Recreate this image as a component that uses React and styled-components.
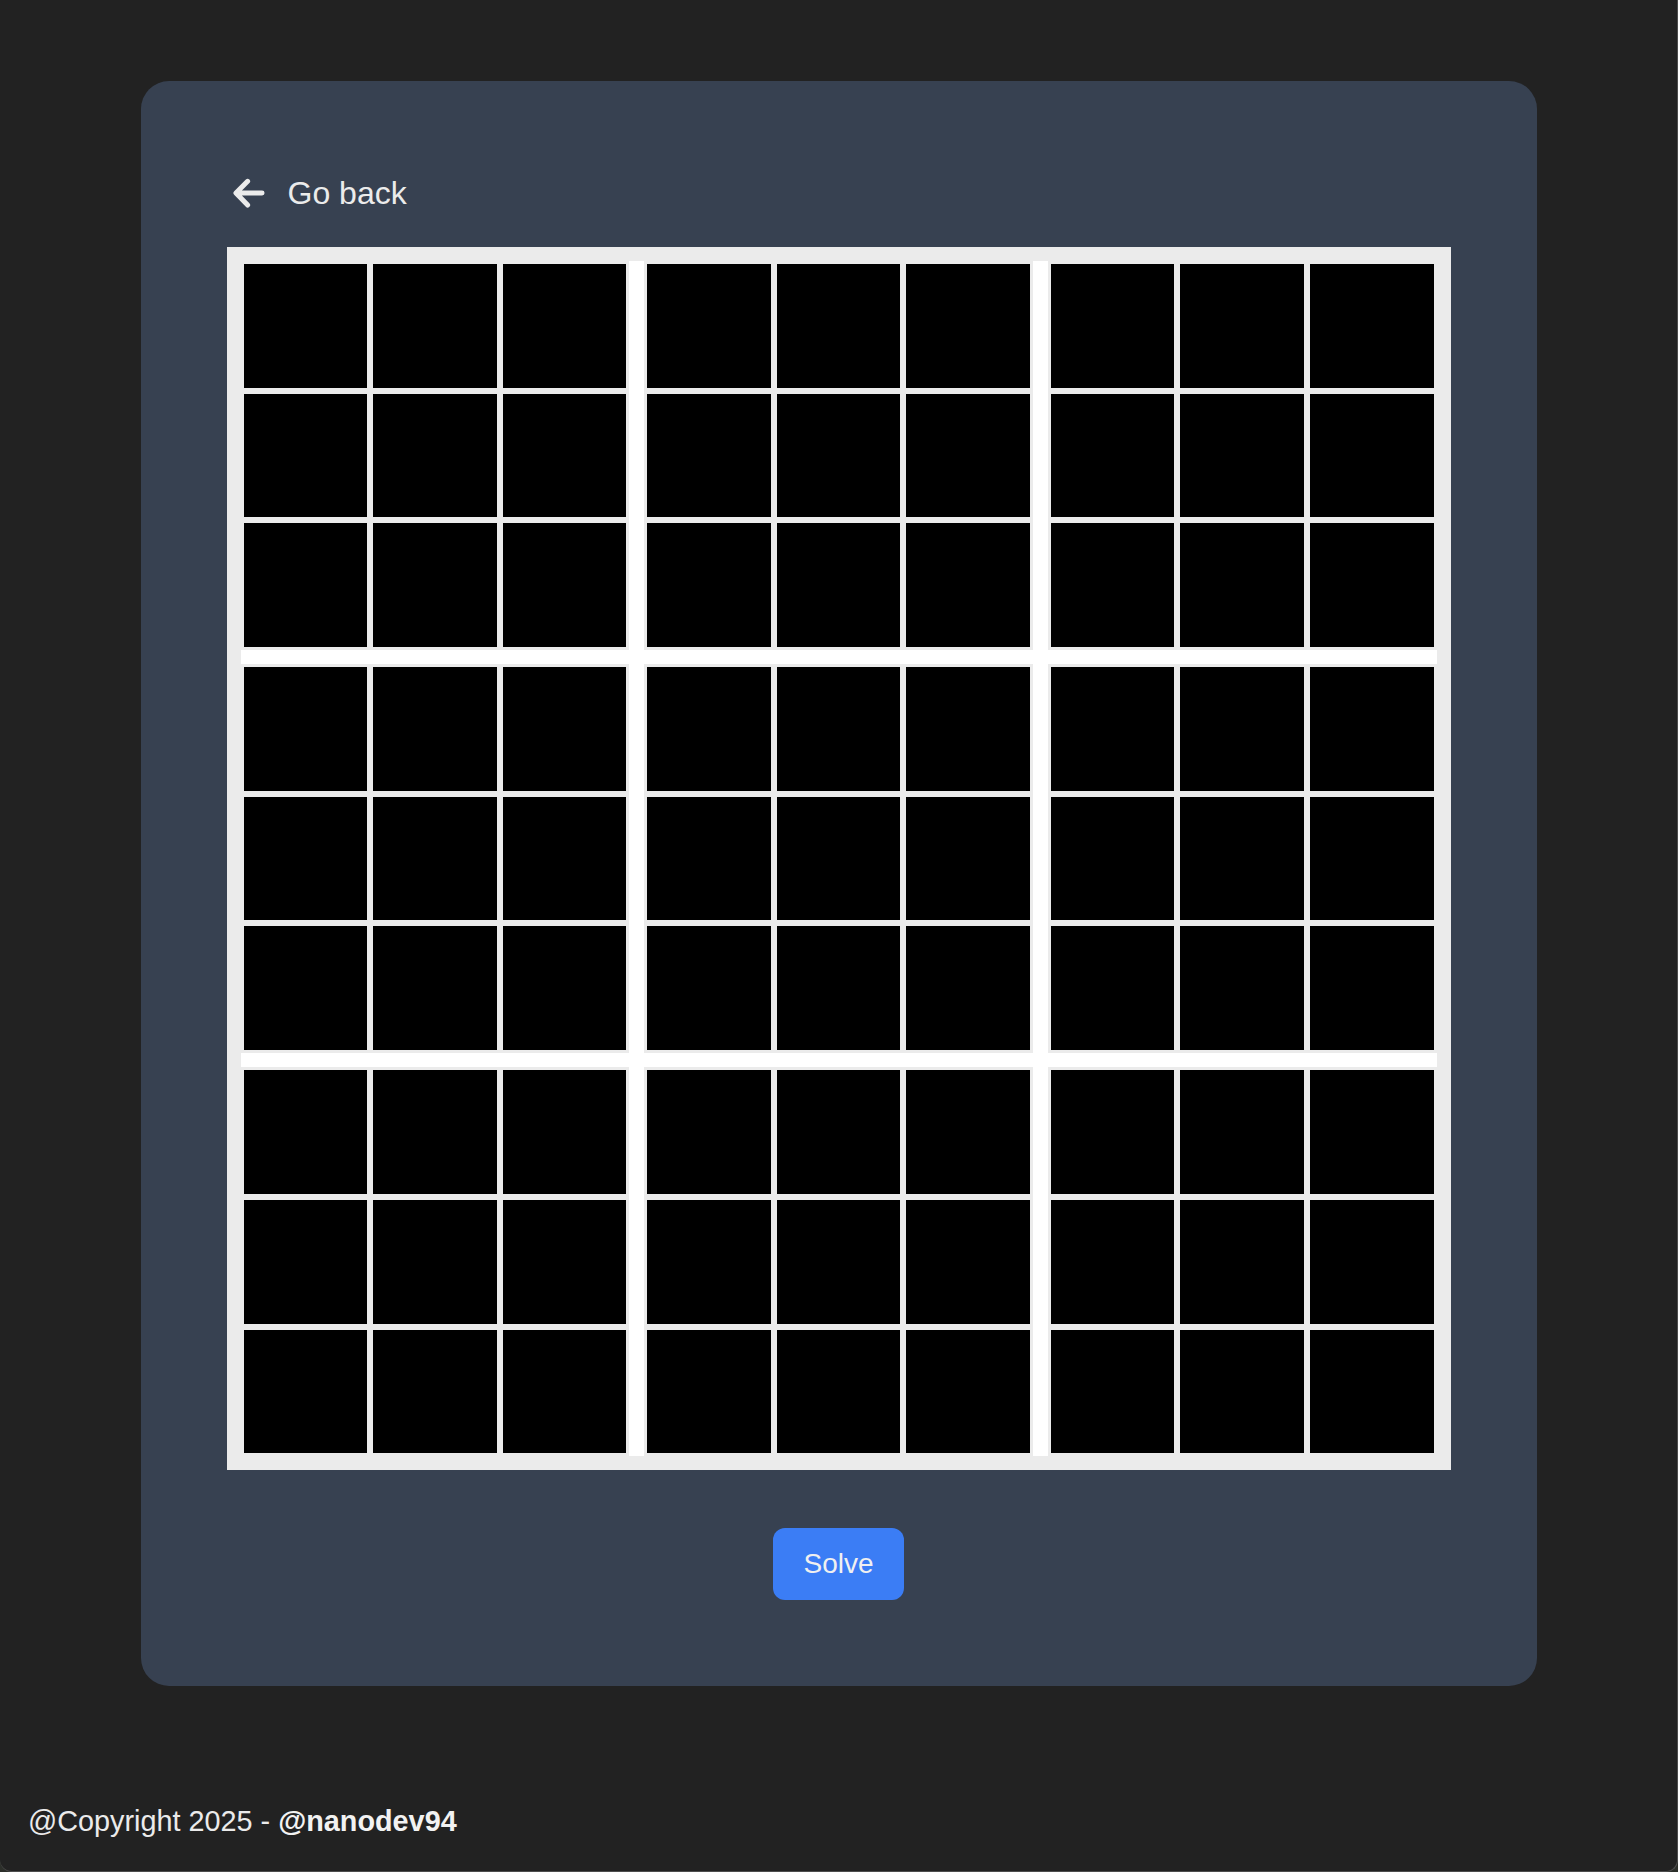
import React from "react";
import styled, { createGlobalStyle } from "styled-components";

const GlobalStyle = createGlobalStyle`
  html, body {
    margin: 0;
    padding: 0;
    background: #2c2f2a;
  }
  * { box-sizing: border-box; }
  body {
    font-family: "Liberation Sans", Arial, Helvetica, sans-serif;
  }
`;

const Page = styled.div`
  width: 1678px;
  min-height: 1872px;
  background: #222222;
  display: flex;
  flex-direction: column;
  border-right: 1px solid #4d4d4d;
  border-bottom: 1px solid #4d4d4d;
  border-bottom-left-radius: 12px;
  border-bottom-right-radius: 12px;
`;

const Main = styled.main`
  padding-top: 81px;
  display: flex;
  justify-content: center;
`;

const Card = styled.section`
  width: 1396px;
  background: #374151;
  border-radius: 28px;
  padding: 90px 86px 86px;
  display: flex;
  flex-direction: column;
`;

const BackLink = styled.a`
  display: flex;
  align-items: center;
  gap: 17px;
  height: 44px;
  color: #ebebeb;
  font-size: 32px;
  text-decoration: none;
  cursor: pointer;
  align-self: flex-start;
`;

const BackIcon = styled.svg`
  width: 44px;
  height: 44px;
  display: block;
  flex: none;
`;

const Board = styled.div`
  margin-top: 32px;
  background: #ebebeb;
  padding: 14px;
`;

const Grid = styled.div`
  display: grid;
  grid-template-columns: repeat(3, 1fr);
  gap: 14.5px 15px;
  background: #ffffff;
`;

const Block = styled.div`
  display: grid;
  grid-template-columns: repeat(3, 1fr);
  gap: 6px;
  padding: 3px;
  background: #ebebeb;
`;

const Cell = styled.div`
  aspect-ratio: 1 / 1;
  background: #000000;
`;

const Actions = styled.div`
  margin-top: 58px;
  display: flex;
  justify-content: center;
`;

const SolveButton = styled.button`
  height: 72px;
  padding: 0 30px;
  border: none;
  border-radius: 12px;
  background: #3b7df5;
  color: #f0f0f0;
  font-family: "Liberation Sans", Arial, Helvetica, sans-serif;
  font-size: 28px;
  cursor: pointer;
`;

const Footer = styled.footer`
  margin-top: auto;
  padding: 0 0 33px 28px;
  color: #ebebeb;
  font-size: 28.8px;
`;

const Handle = styled.strong`
  font-weight: 700;
  color: #f2f2f2;
`;

export default function App() {
  const blocks = Array.from({ length: 9 });
  const cells = Array.from({ length: 9 });
  return (
    <>
      <GlobalStyle />
      <Page>
        <Main>
          <Card>
            <BackLink>
              <BackIcon viewBox="0 0 512 512" aria-hidden="true">
                <path
                  fill="none"
                  stroke="currentColor"
                  strokeLinecap="round"
                  strokeLinejoin="round"
                  strokeWidth="58"
                  d="M240 396L104 256l136-136M124 256h284"
                />
              </BackIcon>
              Go back
            </BackLink>
            <Board>
              <Grid>
                {blocks.map((_, b) => (
                  <Block key={b}>
                    {cells.map((__, c) => (
                      <Cell key={c} />
                    ))}
                  </Block>
                ))}
              </Grid>
            </Board>
            <Actions>
              <SolveButton>Solve</SolveButton>
            </Actions>
          </Card>
        </Main>
        <Footer>
          @Copyright 2025 - <Handle>@nanodev94</Handle>
        </Footer>
      </Page>
    </>
  );
}
